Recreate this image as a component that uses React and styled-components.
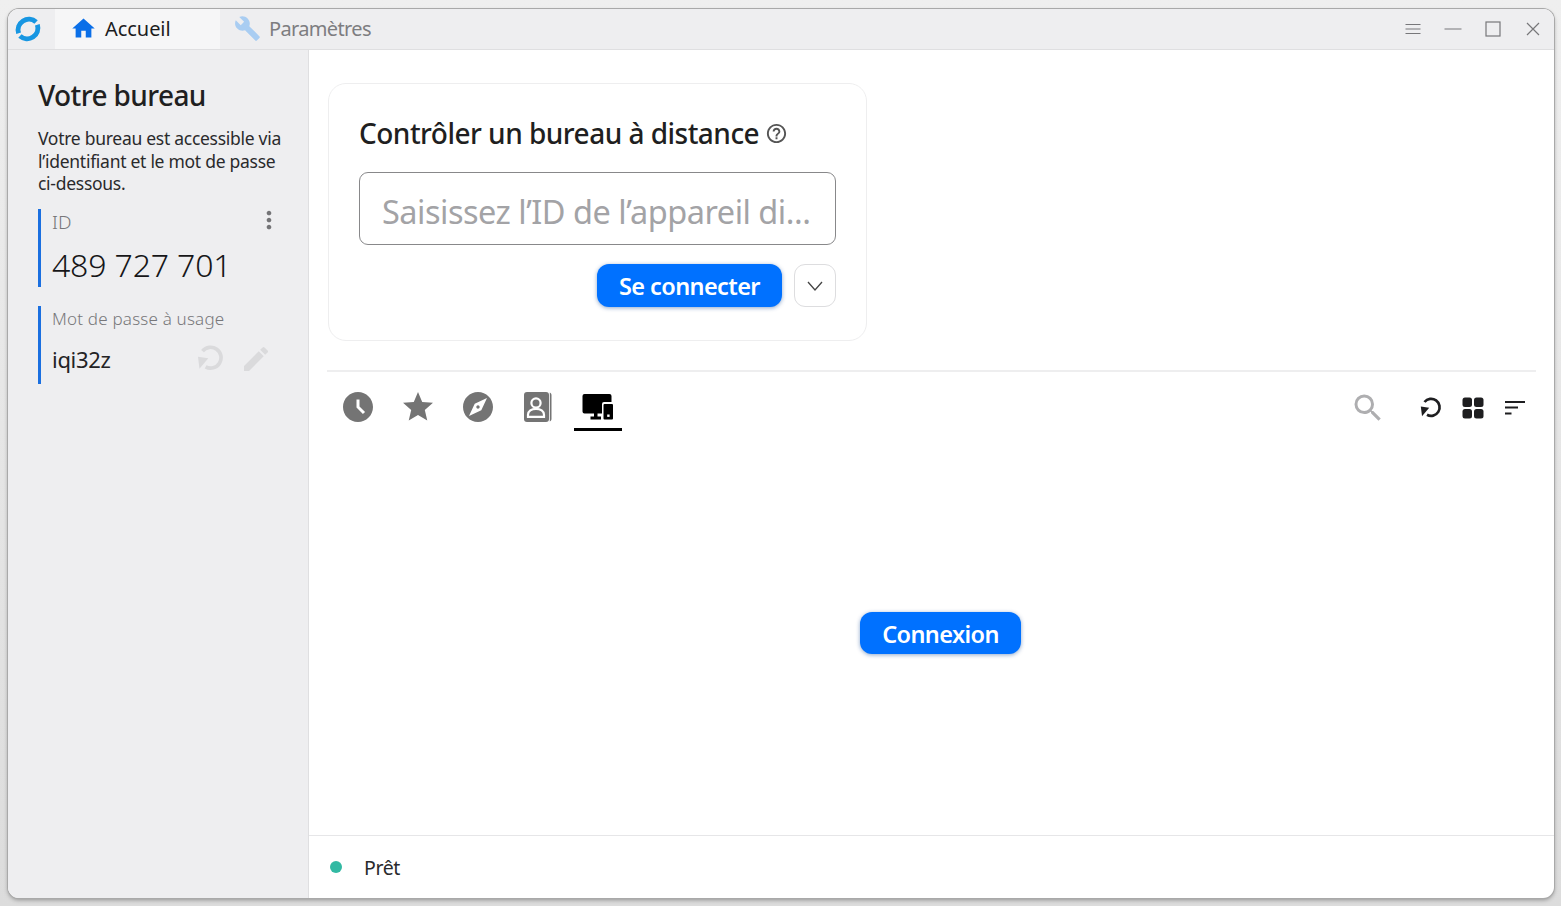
import React from "react";
import styled, { createGlobalStyle } from "styled-components";
import { MdHome, MdBuild, MdStar, MdExplore, MdSearch, MdMoreVert, MdEdit, MdHelpOutline } from "react-icons/md";

const GlobalStyle = createGlobalStyle`
  html, body { margin: 0; padding: 0; height: 100%; overflow: hidden; background: #e6e6e6; }
  body { font-family: "Noto Sans", "Open Sans", sans-serif; color: #1f1f21; }
  * { box-sizing: border-box; }
`;

const Desktop = styled.div`
  width: 1561px;
  height: 906px;
  padding: 9px 7px 8px 8px;
  background: linear-gradient(#efefef, #dcdcdc);
`;

const Window = styled.div`
  height: 100%;
  display: flex;
  flex-direction: column;
  background: #fff;
  border-radius: 11px;
  overflow: hidden;
  box-shadow: 0 0 0 1px #a9a9a9, 0 2px 4px rgba(0, 0, 0, 0.35);
`;

const TitleBar = styled.div`
  height: 41px;
  flex: none;
  display: flex;
  align-items: stretch;
  background: #eeeef0;
  border-bottom: 1px solid #dfdfe1;
`;

const LogoBox = styled.div`
  width: 47px;
  display: flex;
  align-items: center;
  padding-left: 6px;
`;

const Tab = styled.div`
  width: ${(p) => (p.$active ? "165px" : "auto")};
  display: flex;
  align-items: center;
  gap: 8px;
  padding: 0 0 2px ${(p) => (p.$active ? "15px" : "14px")};
  font-size: 20px;
  letter-spacing: ${(p) => (p.$active ? "-0.05px" : "-0.65px")};
  background: ${(p) => (p.$active ? "#f6f6f7" : "transparent")};
  color: ${(p) => (p.$active ? "#1c1c1e" : "#7d7d80")};
`;

const WinControls = styled.div`
  margin-left: auto;
  display: flex;
  align-items: center;
  gap: 20px;
  padding-right: 11px;
`;

const Body = styled.div`
  flex: 1;
  display: flex;
  min-height: 0;
`;

const Sidebar = styled.aside`
  width: 301px;
  flex: none;
  padding: 25px 24px 0 30px;
  background: #eeeef0;
  border-right: 1px solid #dfdfe1;
`;

const SideTitle = styled.h1`
  margin: 0;
  font-size: 28px;
  font-weight: 500;
  line-height: 40px;
  letter-spacing: -0.6px;
  color: #1f1f21;
`;

const SideText = styled.p`
  margin: 12px 0 14px 0;
  font-size: 17.5px;
  line-height: 22.5px;
  letter-spacing: -0.28px;
  color: #2a2a2c;
`;

const InfoBlock = styled.div`
  position: relative;
  height: 78px;
  margin-bottom: 19px;
  padding-left: 11px;
  border-left: 3px solid #1a6fe0;
`;

const InfoLabel = styled.div`
  padding-top: ${(p) => p.$top}px;
  font-size: ${(p) => p.$size}px;
  font-weight: 300;
  line-height: 24px;
  letter-spacing: 0.2px;
  color: #77777a;
`;

const IdValue = styled.div`
  margin-top: 9px;
  font-size: 32px;
  font-weight: 300;
  line-height: 44px;
  letter-spacing: -0.15px;
  color: #161618;
`;

const PassRow = styled.div`
  display: flex;
  align-items: center;
  margin-top: 12px;
  font-size: 22px;
  line-height: 32px;
  letter-spacing: -0.3px;
  color: #232325;
`;

const PassActions = styled.div`
  margin-left: auto;
  margin-right: 12px;
  display: flex;
  align-items: center;
  gap: 16px;
`;

const MoreButton = styled.span`
  position: absolute;
  right: 1px;
  top: -3px;
  display: flex;
  color: #747477;
`;

const Main = styled.main`
  flex: 1;
  min-width: 0;
  display: flex;
  flex-direction: column;
`;

const TopArea = styled.div`
  padding: 33px 18px 0 19px;
  height: 320px;
`;

const ConnectCard = styled.section`
  width: 539px;
  height: 258px;
  padding: 30px 30px 0 30px;
  background: #fff;
  border: 1px solid #eeeeef;
  border-radius: 18px;
`;

const CardTitle = styled.h2`
  margin: 0;
  display: flex;
  align-items: center;
  gap: 6px;
  font-size: 28px;
  line-height: 38px;
  font-weight: 500;
  letter-spacing: -0.52px;
  color: #1f1f21;
`;

const IdInput = styled.div`
  margin-top: 20px;
  height: 73px;
  display: flex;
  align-items: center;
  padding: 5px 22px 0;
  border: 1px solid #88888a;
  border-radius: 9px;
  font-size: 32.5px;
  letter-spacing: -0.5px;
  color: #a3a3a6;
  white-space: nowrap;
`;

const ActionRow = styled.div`
  margin-top: 19px;
  display: flex;
  justify-content: flex-end;
  gap: 12px;
`;

const PrimaryButton = styled.button`
  width: ${(p) => p.$width}px;
  height: ${(p) => p.$height}px;
  border: 0;
  padding: 1px 0 0;
  background: #0071ff;
  color: #fff;
  border-radius: 12px;
  font-family: inherit;
  font-size: 23.5px;
  font-weight: 600;
  letter-spacing: -0.6px;
  box-shadow: 0 1px 4px rgba(0, 60, 140, 0.45);
`;

const MoreConnect = styled.button`
  width: 42px;
  height: 43px;
  padding: 0;
  display: flex;
  align-items: center;
  justify-content: center;
  background: #fff;
  border: 1px solid #dddddf;
  border-radius: 11px;
`;

const PeerArea = styled.div`
  flex: 1;
  min-height: 0;
  display: flex;
  flex-direction: column;
  padding-left: 18px;
`;

const PeerBar = styled.div`
  margin-right: 18px;
  height: 61px;
  display: flex;
  align-items: flex-end;
  border-top: 2px solid #eeeeef;
`;

const PeerTabs = styled.div`
  display: flex;
  gap: 12px;
  padding-left: 7px;
`;

const PeerTab = styled.div`
  width: 48px;
  height: 48px;
  display: flex;
  align-items: center;
  justify-content: center;
  padding-top: 3px;
  border-bottom: 3px solid ${(p) => (p.$active ? "#000" : "transparent")};
  color: ${(p) => (p.$active ? "#000" : "#747474")};
`;

const PeerTools = styled.div`
  margin-left: auto;
  height: 48px;
  display: flex;
  align-items: center;
  padding: 2px 10px 0 0;
  color: #1e1e20;
`;

const ToolSlot = styled.span`
  display: flex;
  margin-left: ${(p) => p.$gap}px;
  color: ${(p) => p.$color || "inherit"};
`;

const EmptyState = styled.div`
  flex: 1;
  display: flex;
  align-items: center;
  justify-content: center;
`;

const StatusBar = styled.footer`
  height: 63px;
  flex: none;
  display: flex;
  align-items: center;
  padding-left: 21px;
  border-top: 1px solid #e6e6e8;
  font-size: 19.5px;
  letter-spacing: -0.4px;
  color: #2a2a2c;
`;

const StatusDot = styled.span`
  width: 12px;
  height: 12px;
  margin-right: 22px;
  border-radius: 50%;
  background: #32b9a3;
`;

const Logo = () => (
  <svg width="28" height="28" viewBox="0 0 26 26" fill="none" stroke="#1796e2" strokeWidth="4.6">
    <path d="M20.5 6.5A10 10 0 0 0 4.3 17" />
    <path d="M5.5 19.5A10 10 0 0 0 21.7 9" />
  </svg>
);

const Refresh = ({ size, color, weight }) => (
  <svg width={size} height={size} viewBox="5 4 22 22" fill="none">
    <path d="M9.500 9A8.500 8.500 0 1 1 12 21.800" stroke={color} strokeWidth={weight} />
    <path d="M5.800 13.500l8.400 1.300L7 23.300z" fill={color} />
  </svg>
);

const AccessTime = () => (
  <svg width="36" height="36" viewBox="0 0 24 24" fill="currentColor">
    <path d="M11.99 2C6.47 2 2 6.48 2 12s4.47 10 9.99 10C17.52 22 22 17.52 22 12S17.52 2 11.99 2zm3.3 14.71L11 12.41V7h2v4.59l3.71 3.71-1.42 1.41z" />
  </svg>
);

const ContactBook = () => (
  <svg width="30" height="32" viewBox="0 0 30 32">
    <rect x="1" y="1" width="25" height="30" rx="3" fill="currentColor" />
    <path d="M26.800 1.500c1 .5 1.700 1.300 1.700 2.500v24c0 1.200-.7 2-1.700 2.500z" fill="currentColor" />
    <circle cx="13" cy="12" r="4.600" fill="none" stroke="#fff" strokeWidth="2.200" />
    <path d="M5 25.800v-2c0-3.500 3.500-6 8-6s8 2.500 8 6v2z" fill="none" stroke="#fff" strokeWidth="2.200" />
  </svg>
);

const Devices = () => (
  <svg width="32" height="28" viewBox="0 0 32 28">
    <path d="M2.500 1h25a2 2 0 0 1 2 2V9H22a2 2 0 0 0-2 2v9.500H2.500a2 2 0 0 1-2-2V3a2 2 0 0 1 2-2z" fill="currentColor" />
    <rect x="8.500" y="23.500" width="10.500" height="3" fill="currentColor" />
    <rect x="12" y="19" width="3.500" height="5" fill="currentColor" />
    <rect x="21.500" y="11" width="9.500" height="15.500" rx="1" fill="currentColor" />
    <rect x="25.200" y="21.500" width="2.400" height="2.400" fill="#fff" />
  </svg>
);

const Grid = () => (
  <svg width="22" height="22" viewBox="0 0 22 22" fill="currentColor">
    <rect x="0.500" y="0.500" width="9.500" height="9.500" rx="2.500" />
    <rect x="12" y="0.500" width="9.500" height="9.500" rx="2.500" />
    <rect x="0.500" y="12" width="9.500" height="9.500" rx="2.500" />
    <rect x="12" y="12" width="9.500" height="9.500" rx="2.500" />
  </svg>
);

const Sort = () => (
  <svg width="22" height="16" viewBox="0 0 22 16" fill="currentColor">
    <rect x="1" y="1" width="20" height="2" />
    <rect x="1" y="6.500" width="13" height="2" />
    <rect x="1" y="12.500" width="6.500" height="2" />
  </svg>
);

const Chevron = () => (
  <svg width="18" height="12" viewBox="0 0 18 12" fill="none" stroke="#444" strokeWidth="1.300">
    <path d="M2 2l7 8 7-8" />
  </svg>
);

const WinIcon = ({ children }) => (
  <svg width="20" height="20" viewBox="0 0 20 20" fill="none" stroke="#77777a" strokeWidth="1.200">
    {children}
  </svg>
);

export default function App() {
  return (
    <Desktop>
      <GlobalStyle />
      <Window>
        <TitleBar>
          <LogoBox>
            <Logo />
          </LogoBox>
          <Tab $active>
            <MdHome size={27} color="#0b6fe8" />
            Accueil
          </Tab>
          <Tab>
            <MdBuild size={27} color="#a9cdf2" />
            Paramètres
          </Tab>
          <WinControls>
            <WinIcon>
              <path d="M2.500 5.500h15M2.500 10h15M2.500 14.500h15" />
            </WinIcon>
            <WinIcon>
              <path d="M1.500 10h17" />
            </WinIcon>
            <WinIcon>
              <rect x="3" y="3" width="14" height="14" />
            </WinIcon>
            <WinIcon>
              <path d="M4 4l12 12M16 4L4 16" />
            </WinIcon>
          </WinControls>
        </TitleBar>
        <Body>
          <Sidebar>
            <SideTitle>Votre bureau</SideTitle>
            <SideText>
              Votre bureau est accessible via l’identifiant et le mot de passe ci-dessous.
            </SideText>
            <InfoBlock>
              <InfoLabel $top={1} $size={19}>ID</InfoLabel>
              <MoreButton>
                <MdMoreVert size={28} />
              </MoreButton>
              <IdValue>489 727 701</IdValue>
            </InfoBlock>
            <InfoBlock>
              <InfoLabel $top={1} $size={17}>Mot de passe à usage</InfoLabel>
              <PassRow>
                iqi32z
                <PassActions>
                  <Refresh size={27} color="#dadadc" weight="3" />
                  <MdEdit size={32} color="#dadadc" />
                </PassActions>
              </PassRow>
            </InfoBlock>
          </Sidebar>
          <Main>
            <TopArea>
              <ConnectCard>
                <CardTitle>
                  Contrôler un bureau à distance
                  <MdHelpOutline size={23} color="#555" />
                </CardTitle>
                <IdInput>Saisissez l’ID de l’appareil di...</IdInput>
                <ActionRow>
                  <PrimaryButton $width={185} $height={43}>Se connecter</PrimaryButton>
                  <MoreConnect>
                    <Chevron />
                  </MoreConnect>
                </ActionRow>
              </ConnectCard>
            </TopArea>
            <PeerArea>
              <PeerBar>
                <PeerTabs>
                  <PeerTab><AccessTime /></PeerTab>
                  <PeerTab><MdStar size={36} /></PeerTab>
                  <PeerTab><MdExplore size={36} /></PeerTab>
                  <PeerTab><ContactBook /></PeerTab>
                  <PeerTab $active><Devices /></PeerTab>
                </PeerTabs>
                <PeerTools>
                  <ToolSlot $color="#aeaeb0"><MdSearch size={36} /></ToolSlot>
                  <ToolSlot $gap={34}><Refresh size={22} color="#1e1e20" weight="2.700" /></ToolSlot>
                  <ToolSlot $gap={20}><Grid /></ToolSlot>
                  <ToolSlot $gap={20}><Sort /></ToolSlot>
                </PeerTools>
              </PeerBar>
              <EmptyState>
                <PrimaryButton $width={161} $height={42}>Connexion</PrimaryButton>
              </EmptyState>
            </PeerArea>
            <StatusBar>
              <StatusDot />
              Prêt
            </StatusBar>
          </Main>
        </Body>
      </Window>
    </Desktop>
  );
}
